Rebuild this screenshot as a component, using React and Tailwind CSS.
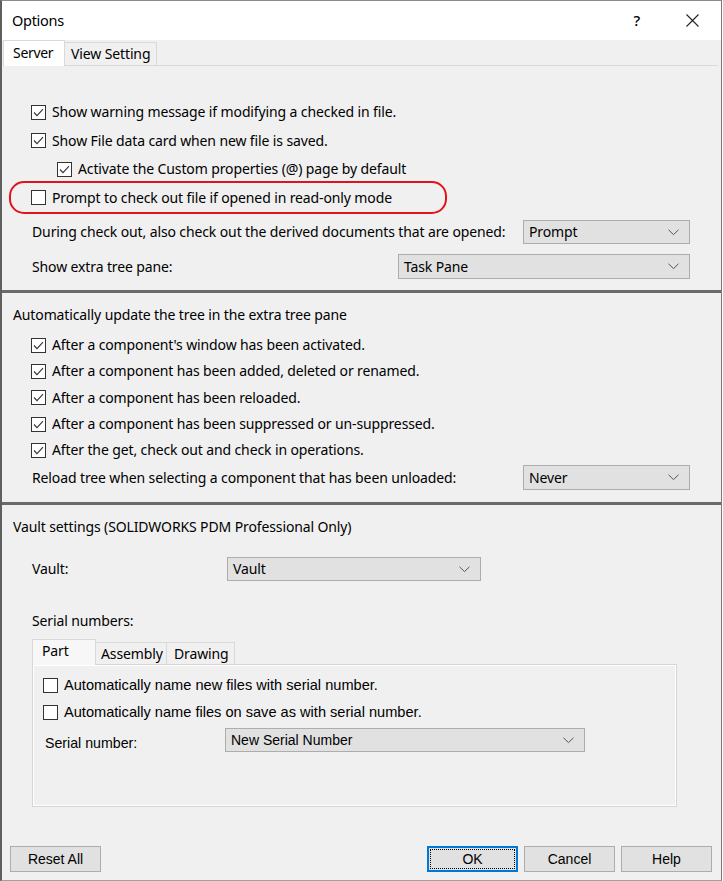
import React from "react";

function Check({ checked }) {
  return (
    <span className="w-[15px] h-[15px] border border-[#333333] bg-white flex items-center justify-center shrink-0">
      {checked && (
        <svg width="13" height="13" viewBox="0 0 13 13">
          <path d="M2 6.5 L5 9.6 L11 3.2" fill="none" stroke="#333333" strokeWidth="1.1" />
        </svg>
      )}
    </span>
  );
}

function Chevron() {
  return (
    <svg width="11" height="7" viewBox="0 0 11 7" className="shrink-0">
      <path d="M0.5 0.8 L5.5 5.6 L10.5 0.8" fill="none" stroke="#555555" strokeWidth="1" />
    </svg>
  );
}

function Select({ value, className }) {
  return (
    <div className={"h-full bg-[#e1e1e1] border border-[#adadad] flex items-center justify-between pl-[5px] pr-[10px] " + className}>
      <span>{value}</span>
      <Chevron />
    </div>
  );
}

function CheckRow({ checked, label, h, indent }) {
  return (
    <div className={"flex items-center gap-[6px] " + h + " " + indent}>
      <Check checked={checked} />
      <span>{label}</span>
    </div>
  );
}

function Button({ children, focused }) {
  return (
    <div
      className={
        "w-[91px] h-[26px] bg-[#e1e1e1] flex items-center justify-center " +
        (focused ? "border-2 border-[#0078d7] p-px" : "border border-[#adadad]")
      }
    >
      {focused ? (
        <div className="w-full h-full border border-dotted border-black flex items-center justify-center">{children}</div>
      ) : (
        children
      )}
    </div>
  );
}

export default function App() {
  return (
    <div className="w-[722px] h-[881px] bg-[#f0f0f0] relative flex flex-col border-t border-t-[#8a8a8a] border-l-2 border-l-[#5f5f5f] border-r border-r-[#7a7a7a] border-b border-b-[#a0a0a0] text-black font-['Noto_Sans','Open_Sans',sans-serif] text-[14px] tracking-[-0.12px] leading-none overflow-hidden">
      {/* Title bar */}
      <div className="h-[39px] bg-white flex items-center pl-[10px] pr-[22px] shrink-0">
        <span className="text-[14.5px] tracking-[-0.3px]">Options</span>
        <span className="ml-auto text-[15px] font-medium mr-[46px]">?</span>
        <svg width="13" height="13" viewBox="0 0 13 13">
          <path d="M0.5 0.5 L12.5 12.5 M12.5 0.5 L0.5 12.5" stroke="#222" strokeWidth="1.1" />
        </svg>
      </div>

      {/* Tab strip */}
      <div className="h-[26px] flex items-end shrink-0 pl-px">
        <div className="h-[26px] w-[62px] bg-white border-t border-l border-r border-[#d9d9d9] flex items-center pl-[9px] pb-[2px] tracking-[-0.3px]">Server</div>
        <div className="h-[24px] w-[92px] bg-[#f0f0f0] border border-l-0 border-[#d9d9d9] flex items-center pl-[6px]">View Setting</div>
        <div className="flex-1 h-px bg-[#d9d9d9] mr-[3px]"></div>
      </div>

      {/* Section 1 */}
      <div className="h-[224px] shrink-0 flex flex-col pt-[32px] pl-[29px] pr-[31px]">
        <CheckRow checked label="Show warning message if modifying a checked in file." h="h-[28px]" indent="" />
        <CheckRow checked label="Show File data card when new file is saved." h="h-[29px]" indent="" />
        <CheckRow checked label="Activate the Custom properties (@) page by default" h="h-[28px]" indent="pl-[26px]" />
        <CheckRow checked={false} label="Prompt to check out file if opened in read-only mode" h="h-[29px]" indent="" />
        <div className="flex items-center h-[24px] mt-[8px] pl-px">
          <span>During check out, also check out the derived documents that are opened:</span>
          <Select value="Prompt" className="ml-auto w-[167px]" />
        </div>
        <div className="flex items-center h-[25px] mt-[10px] pl-px">
          <span>Show extra tree pane:</span>
          <Select value="Task Pane" className="ml-auto w-[292px]" />
        </div>
      </div>

      <div className="h-[3px] bg-[#6a6a6a] shrink-0"></div>

      {/* Section 2 */}
      <div className="h-[209px] shrink-0 flex flex-col pt-[12px] pl-[29px] pr-[31px]">
        <div className="h-[20px] flex items-center -ml-[18px]">Automatically update the tree in the extra tree pane</div>
        <div className="mt-[7px] flex flex-col">
          <CheckRow checked label="After a component's window has been activated." h="h-[26px]" indent="" />
          <CheckRow checked label="After a component has been added, deleted or renamed." h="h-[26px]" indent="" />
          <CheckRow checked label="After a component has been reloaded." h="h-[27px]" indent="" />
          <CheckRow checked label="After a component has been suppressed or un-suppressed." h="h-[26px]" indent="" />
          <CheckRow checked label="After the get, check out and check in operations." h="h-[26px]" indent="" />
        </div>
        <div className="flex items-center h-[25px] mt-[2px] pl-px">
          <span>Reload tree when selecting a component that has been unloaded:</span>
          <Select value="Never" className="ml-auto w-[167px]" />
        </div>
      </div>

      <div className="h-[3px] bg-[#6a6a6a] shrink-0"></div>

      {/* Section 3 */}
      <div className="flex-1 flex flex-col pt-[12px]">
        <div className="h-[20px] flex items-center pl-[11px]">Vault settings (SOLIDWORKS PDM Professional Only)</div>
        <div className="flex items-center h-[24px] mt-[20px] pl-[30px]">
          <span className="w-[195px]">Vault:</span>
          <Select value="Vault" className="w-[254px]" />
        </div>
        <div className="h-[20px] mt-[30px] flex items-center pl-[30px]">Serial numbers:</div>

        <div className="mt-[8px] ml-[30px] w-[645px] flex flex-col">
          <div className="h-[25px] flex items-end">
            <div className="h-[26px] w-[64px] -mb-px relative z-10 bg-[#f7f7f7] border-t border-l border-r border-[#d9d9d9] flex items-center pl-[9px] pb-[3px]">Part</div>
            <div className="h-[22px] w-[71px] border-t border-r border-[#d9d9d9] flex items-center pl-[5px]">Assembly</div>
            <div className="h-[22px] w-[68px] border-t border-r border-[#d9d9d9] flex items-center pl-[7px]">Drawing</div>
          </div>
          <div className="h-[143px] border border-[#d5d5d5] shadow-[inset_0_0_0_1px_#ffffff] bg-[#f0f0f0] flex flex-col pt-[10px] pl-[10px] font-['Liberation_Sans',sans-serif] text-[14.6px] tracking-normal">
            <CheckRow checked={false} label="Automatically name new files with serial number." h="h-[20px]" indent="gap-[5px]" />
            <CheckRow checked={false} label="Automatically name files on save as with serial number." h="h-[20px] mt-[7px]" indent="gap-[5px]" />
            <div className="flex items-center h-[24px] mt-[6px]">
              <span className="w-[182px] pl-[2px] pt-[6px] text-[14.2px]">Serial number:</span>
              <Select value="New Serial Number" className="w-[360px] text-[14px]" />
            </div>
          </div>
        </div>

        <div className="mt-[39px] h-[26px] flex items-center pl-[8px] pr-[9px] font-['Liberation_Sans',sans-serif] text-[14px] tracking-normal">
          <Button>Reset All</Button>
          <div className="ml-auto flex gap-[6px]">
            <Button focused>OK</Button>
            <Button>Cancel</Button>
            <Button>Help</Button>
          </div>
        </div>
      </div>

      {/* Red annotation */}
      <div className="absolute left-[7px] top-[180px] w-[438px] h-[33px] border-2 border-[#e0141e] rounded-[15px] pointer-events-none"></div>
    </div>
  );
}
